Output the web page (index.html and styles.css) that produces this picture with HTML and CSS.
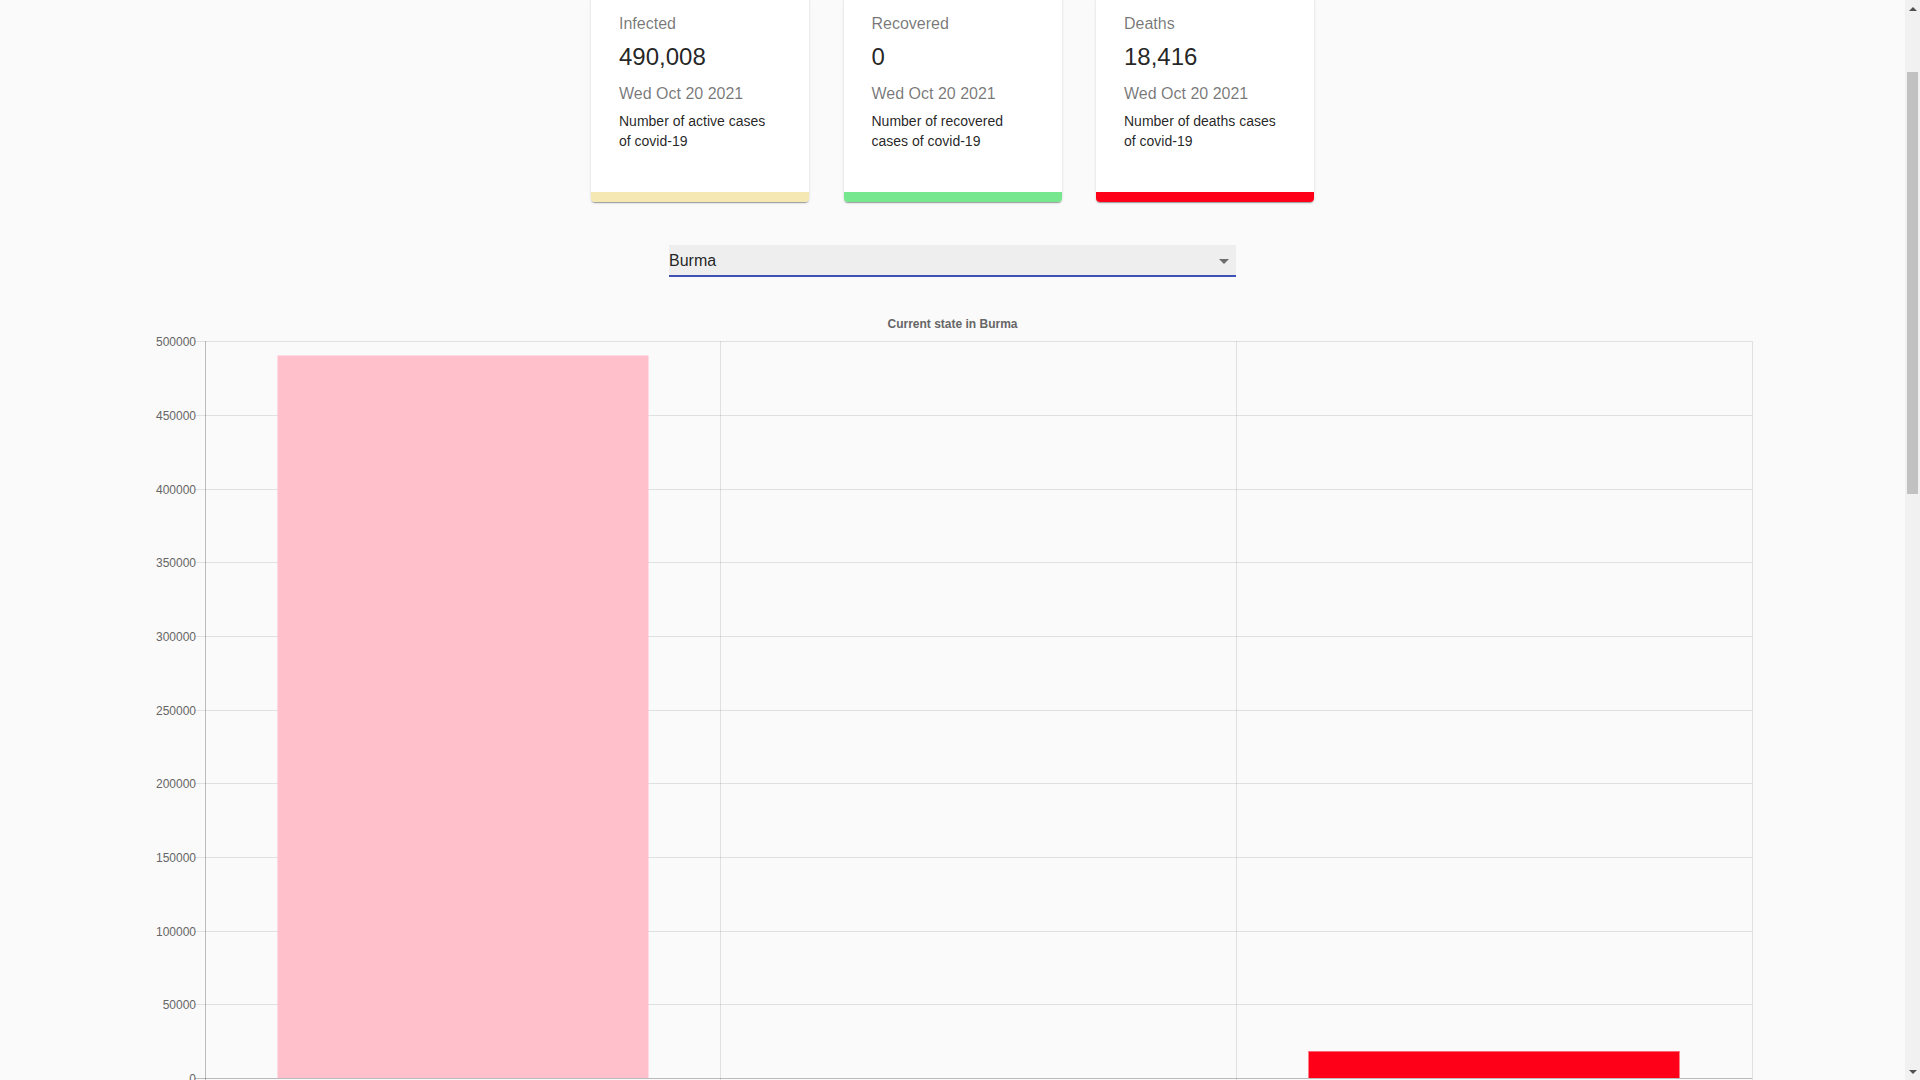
FILE: index.html
```html
<!DOCTYPE html>
<html lang="en">
<head>
<meta charset="utf-8">
<title>Covid-19 Tracker</title>
<link rel="stylesheet" href="styles.css">
</head>
<body>
<main class="page">
  <section class="cards">
    <div class="card">
      <div class="card-content">
        <p class="card-label">Infected</p>
        <p class="card-value">490,008</p>
        <p class="card-date">Wed Oct 20 2021</p>
        <p class="card-text">Number of active cases of covid-19</p>
      </div>
      <div class="card-bar bar-infected"></div>
    </div>
    <div class="card">
      <div class="card-content">
        <p class="card-label">Recovered</p>
        <p class="card-value">0</p>
        <p class="card-date">Wed Oct 20 2021</p>
        <p class="card-text">Number of recovered cases of covid-19</p>
      </div>
      <div class="card-bar bar-recovered"></div>
    </div>
    <div class="card">
      <div class="card-content">
        <p class="card-label">Deaths</p>
        <p class="card-value">18,416</p>
        <p class="card-date">Wed Oct 20 2021</p>
        <p class="card-text">Number of deaths cases of covid-19</p>
      </div>
      <div class="card-bar bar-deaths"></div>
    </div>
  </section>

  <div class="select">
    <span class="select-value">Burma</span>
    <svg class="select-icon" viewBox="0 0 24 24" width="24" height="24"><path d="M7 10l5 5 5-5z"/></svg>
  </div>

  <section class="chart">
    <svg class="chart-svg" width="1705" height="820" viewBox="0 0 1705 820">
      <text class="chart-title" x="852.5" y="27.7" text-anchor="middle">Current state in Burma</text>
      <g class="grid-h">
        <line x1="95" x2="1652" y1="41.5" y2="41.5"/>
        <line x1="95" x2="1652" y1="115.5" y2="115.5"/>
        <line x1="95" x2="1652" y1="189.5" y2="189.5"/>
        <line x1="95" x2="1652" y1="262.5" y2="262.5"/>
        <line x1="95" x2="1652" y1="336.5" y2="336.5"/>
        <line x1="95" x2="1652" y1="410.5" y2="410.5"/>
        <line x1="95" x2="1652" y1="483.5" y2="483.5"/>
        <line x1="95" x2="1652" y1="557.5" y2="557.5"/>
        <line x1="95" x2="1652" y1="631.5" y2="631.5"/>
        <line x1="95" x2="1652" y1="704.5" y2="704.5"/>
      </g>
      <g class="grid-v">
        <line x1="620.5" x2="620.5" y1="41" y2="788"/>
        <line x1="1136.5" x2="1136.5" y1="41" y2="788"/>
        <line x1="1652.5" x2="1652.5" y1="41" y2="788"/>
      </g>
      <rect class="bar-pink" x="177.5" y="55.5" width="371" height="722.5"/>
      <rect class="bar-red" x="1208.5" y="751" width="371" height="27"/>
      <line class="bar-red-edge" x1="1209" x2="1579" y1="751.5" y2="751.5"/>
      <g class="axis">
        <line x1="105.5" x2="105.5" y1="41" y2="788"/>
        <line x1="95" x2="1652" y1="778.5" y2="778.5"/>
      </g>
      <g class="ticks" text-anchor="end">
        <text x="96" y="45.5">500000</text>
        <text x="96" y="119.5">450000</text>
        <text x="96" y="193.5">400000</text>
        <text x="96" y="266.5">350000</text>
        <text x="96" y="340.5">300000</text>
        <text x="96" y="414.5">250000</text>
        <text x="96" y="487.5">200000</text>
        <text x="96" y="561.5">150000</text>
        <text x="96" y="635.5">100000</text>
        <text x="96" y="708.5">50000</text>
        <text x="96" y="782.5">0</text>
      </g>
      <g class="ticks" text-anchor="middle">
        <text x="363" y="805">Infected</text>
        <text x="878.5" y="805">Recovered</text>
        <text x="1394" y="805">Deaths</text>
      </g>
    </svg>
  </section>
  <div class="spacer"></div>
</main>
<aside class="scrollbar" aria-hidden="true">
  <div class="sb-button"><span class="sb-arrow-up"></span></div>
  <div class="sb-track"><div class="sb-thumb"></div></div>
  <div class="sb-button"><span class="sb-arrow-down"></span></div>
</aside>
<script src="script.js"></script>
</body>
</html>
```

FILE: styles.css
```css
html, body {
  margin: 0;
  padding: 0;
}
body {
  background: #fafafa;
  font-family: "Liberation Sans", Arial, sans-serif;
  color: rgba(0, 0, 0, 0.87);
}
.page {
  padding-top: 142px;
  margin-right: 15px;
}
.cards {
  display: flex;
  justify-content: center;
  gap: 34.5px;
}
.card {
  width: 218px;
  background: #fff;
  border-radius: 4px;
  overflow: hidden;
  box-shadow: 0 2px 1px -1px rgba(0,0,0,0.2), 0 1px 1px 0 rgba(0,0,0,0.14), 0 1px 3px 0 rgba(0,0,0,0.12);
}
.card-content {
  padding: 16px 34px 41px 28px;
}
.card-content p {
  margin: 0;
}
.card-label {
  font-size: 16px;
  line-height: 24px;
  color: rgba(0, 0, 0, 0.54);
  margin-bottom: 4.6px !important;
}
.card-value {
  font-size: 24px;
  line-height: 32px;
  color: rgba(0, 0, 0, 0.87);
  margin-bottom: 9.4px !important;
}
.card-date {
  font-size: 16px;
  line-height: 24px;
  color: rgba(0, 0, 0, 0.54);
  margin-bottom: 4.6px !important;
}
.card-text {
  font-size: 14px;
  line-height: 20px;
  color: rgba(0, 0, 0, 0.87);
}
.card-bar {
  height: 10px;
}
.bar-infected { background: #f6e8b2; }
.bar-recovered { background: #76e68f; }
.bar-deaths { background: #ff0019; }

.select {
  position: relative;
  box-sizing: border-box;
  width: 567px;
  height: 32px;
  margin: 43px auto 0;
  background: #eeeeee;
  border-bottom: 2px solid #3f51b5;
  padding: 6px 24px 5px 0;
}
.select-value {
  display: block;
  font-size: 16px;
  line-height: 19px;
  color: rgba(0, 0, 0, 0.87);
}
.select-icon {
  position: absolute;
  right: 0;
  top: 4px;
  fill: rgba(0, 0, 0, 0.54);
}

.chart {
  margin-top: 23px;
  display: flex;
  justify-content: center;
}
.chart-svg {
  display: block;
  font-family: "Liberation Sans", Arial, sans-serif;
}
.chart-title {
  font-size: 12px;
  font-weight: bold;
  fill: #666;
}
.grid-h line, .grid-v line {
  stroke: rgba(0, 0, 0, 0.1);
  stroke-width: 1;
}
.axis line {
  stroke: rgba(0, 0, 0, 0.25);
  stroke-width: 1;
}
.ticks text {
  font-size: 12px;
  fill: #666;
}
.bar-pink { fill: #ffc0cb; }
.bar-red { fill: #ff0019; }
.bar-red-edge {
  stroke: #ff6475;
  stroke-width: 1;
}
.spacer {
  height: 1420px;
}

/* browser scrollbar as it appears in the screenshot */
.scrollbar {
  position: fixed;
  top: 0;
  right: 0;
  width: 15px;
  height: 100vh;
  background: #f1f1f1;
  display: flex;
  flex-direction: column;
}
.sb-button {
  height: 17px;
  display: flex;
  align-items: center;
  justify-content: center;
}
.sb-arrow-up {
  width: 0;
  height: 0;
  border-left: 4px solid transparent;
  border-right: 4px solid transparent;
  border-bottom: 4px solid #505050;
}
.sb-arrow-down {
  width: 0;
  height: 0;
  border-left: 4px solid transparent;
  border-right: 4px solid transparent;
  border-top: 4px solid #505050;
}
.sb-track {
  flex: 1;
  padding: 55px 2px 0;
}
.sb-thumb {
  height: 422px;
  background: #c1c1c1;
}
```

FILE: script.js
```js
if ('scrollRestoration' in history) { history.scrollRestoration = 'manual'; }
window.scrollTo(0, 146);
window.addEventListener('load', function () { window.scrollTo(0, 146); });
```
